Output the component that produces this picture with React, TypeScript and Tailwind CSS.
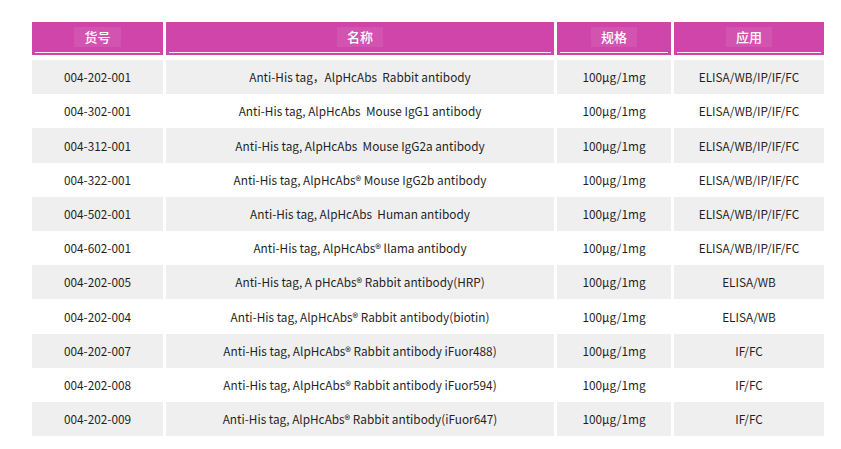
const headers = ["货号", "名称", "规格", "应用"];

const rows = [
  ["004-202-001", "Anti-His tag，AlpHcAbs  Rabbit antibody", "100μg/1mg", "ELISA/WB/IP/IF/FC"],
  ["004-302-001", "Anti-His tag, AlpHcAbs  Mouse IgG1 antibody", "100μg/1mg", "ELISA/WB/IP/IF/FC"],
  ["004-312-001", "Anti-His tag, AlpHcAbs  Mouse IgG2a antibody", "100μg/1mg", "ELISA/WB/IP/IF/FC"],
  ["004-322-001", "Anti-His tag, AlpHcAbs® Mouse IgG2b antibody", "100μg/1mg", "ELISA/WB/IP/IF/FC"],
  ["004-502-001", "Anti-His tag, AlpHcAbs  Human antibody", "100μg/1mg", "ELISA/WB/IP/IF/FC"],
  ["004-602-001", "Anti-His tag, AlpHcAbs® llama antibody", "100μg/1mg", "ELISA/WB/IP/IF/FC"],
  ["004-202-005", "Anti-His tag, A pHcAbs® Rabbit antibody(HRP)", "100μg/1mg", "ELISA/WB"],
  ["004-202-004", "Anti-His tag, AlpHcAbs® Rabbit antibody(biotin)", "100μg/1mg", "ELISA/WB"],
  ["004-202-007", "Anti-His tag, AlpHcAbs® Rabbit antibody iFuor488)", "100μg/1mg", "IF/FC"],
  ["004-202-008", "Anti-His tag, AlpHcAbs® Rabbit antibody iFuor594)", "100μg/1mg", "IF/FC"],
  ["004-202-009", "Anti-His tag, AlpHcAbs® Rabbit antibody(iFuor647)", "100μg/1mg", "IF/FC"],
];

export default function App() {
  return (
    <div
      className="w-[841px] h-[449px] bg-white pt-[22px] pl-[32px] text-[#1f1f1f]"
      style={{ fontFamily: '"Noto Sans CJK SC", "Noto Sans", sans-serif' }}
    >
      {/* Header */}
      <div className="grid grid-cols-[131px_388px_114px_150px] gap-x-[3px]">
        {headers.map((h) => (
          <div key={h} className="h-[33px] bg-[#cf45aa] flex flex-col">
            <div className="flex-1 flex items-center justify-center">
              <span className="bg-[#d353b1] px-[10px] text-[13px] font-medium text-white leading-[20px]">
                {h}
              </span>
            </div>
            <div className="h-px bg-white/90 mx-[3px] mb-[2px]" />
          </div>
        ))}
      </div>

      {/* Body */}
      <div className="mt-[5px] flex flex-col">
        {rows.map((r, i) => (
          <div
            key={r[0]}
            className="grid grid-cols-[131px_388px_114px_150px] gap-x-[3px] h-[34.2px]"
          >
            {r.map((c, j) => (
              <div
                key={j}
                className={
                  "flex items-center justify-center text-[11.8px] whitespace-pre " +
                  (i % 2 === 0 ? "bg-[#efeff0]" : "bg-white")
                }
              >
                {c}
              </div>
            ))}
          </div>
        ))}
      </div>
    </div>
  );
}
